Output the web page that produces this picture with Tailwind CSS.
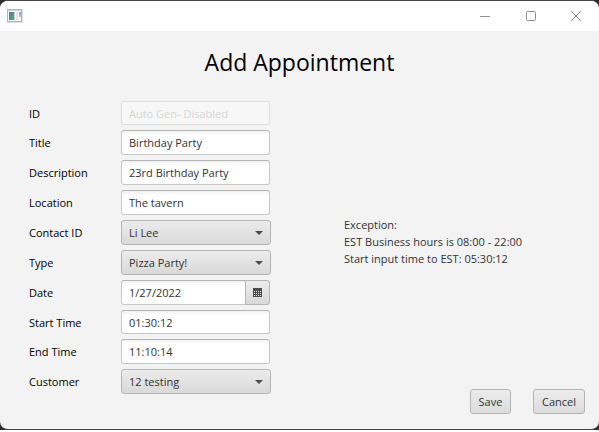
<!DOCTYPE html>
<html lang="en">
<head>
<meta charset="utf-8">
<meta name="viewport" content="width=device-width, initial-scale=1">
<title>Add Appointment</title>
<script src="https://cdn.jsdelivr.net/npm/@tailwindcss/browser@4"></script>
</head>
<body class="flex min-h-screen flex-col bg-white pb-[2px] font-['Open_Sans','Noto_Sans',sans-serif] text-[11px] leading-[17px] text-[#323232]">
<div class="flex grow flex-col bg-[#2b2b2b]">
<div class="flex grow flex-col overflow-hidden rounded-lg border-y border-[#444] bg-[#f3f3f3]">
  <header class="flex h-[30px] shrink-0 items-center justify-between bg-white pl-[7px]">
    <svg class="h-[14px] w-4" viewBox="0 0 16 14" aria-hidden="true">
      <defs><linearGradient id="pane" x1="0" y1="0" x2="1" y2="1"><stop offset="0" stop-color="#5277ac"/><stop offset="1" stop-color="#58ad72"/></linearGradient></defs>
      <rect width="16" height="14" fill="#dddfe1"/>
      <rect x=".5" y=".5" width="14" height="12" fill="#f7f7f7" stroke="#aeb4ba"/>
      <rect x="1" y="1" width="13" height="1" fill="#c9d3dc"/>
      <rect x="2" y="3" width="5" height="8" fill="url(#pane)"/>
      <rect x="7" y="3" width="1" height="8" fill="#c5cdd2"/>
      <rect x="9" y="3" width="2" height="8" fill="#e2e2e2"/>
      <rect x="12" y="3" width="2" height="3" fill="#8eabd3"/>
      <rect x="12" y="6" width="2" height="2" fill="#a4d3a4"/>
    </svg>
    <div class="flex h-full">
      <button type="button" aria-label="Minimize" class="flex w-[45px] items-center justify-center"><svg class="size-[11px]" viewBox="0 0 11 11" fill="none" stroke="#929292"><path d="M0 5.5h10"/></svg></button>
      <button type="button" aria-label="Maximize" class="flex w-[45px] items-center justify-center"><svg class="size-[10px]" viewBox="0 0 10 10" fill="none" stroke="#8c8c8c"><rect x=".5" y=".5" width="9" height="9" rx="1"/></svg></button>
      <button type="button" aria-label="Close" class="flex w-[46px] items-center justify-center"><svg class="size-[10px]" viewBox="0 0 10 10" fill="none" stroke="#8c8c8c"><path d="M0 0l10 10M10 0L0 10"/></svg></button>
    </div>
  </header>

  <main class="flex grow flex-col pr-[14px] pb-[15px] pl-[29px]">
    <h1 class="-mr-[14px] -ml-[29px] pt-[15px] text-center text-[23px] leading-8 text-black">Add Appointment</h1>
    <form class="mt-[23px] flex grow">
      <div class="grid w-[242px] shrink-0 grid-cols-[92px_minmax(0,1fr)] content-start items-center gap-y-[5px]">
        <label for="id" class="text-black">ID</label>
        <input id="id" type="text" placeholder="Auto Gen- Disabled" disabled class="mr-px h-6 min-w-0 rounded-[3px] border border-[#dedede] bg-[#f7f7f7] px-[7px] placeholder:text-[#d6d6d6]">
        <label for="title" class="text-black">Title</label>
        <input id="title" type="text" value="Birthday Party" class="mr-px h-[25px] min-w-0 rounded-[3px] border border-[#c8c8c8] border-t-[#b5b5b5] bg-linear-to-b from-[#f2f2f2] to-white to-20% px-[7px]">
        <label for="description" class="text-black">Description</label>
        <input id="description" type="text" value="23rd Birthday Party" class="mr-px h-[25px] min-w-0 rounded-[3px] border border-[#c8c8c8] border-t-[#b5b5b5] bg-linear-to-b from-[#f2f2f2] to-white to-20% px-[7px]">
        <label for="location" class="text-black">Location</label>
        <input id="location" type="text" value="The tavern" class="mr-px h-[25px] min-w-0 rounded-[3px] border border-[#c8c8c8] border-t-[#b5b5b5] bg-linear-to-b from-[#f2f2f2] to-white to-20% px-[7px]">
        <label for="contact" class="text-black">Contact ID</label>
        <div class="grid grid-cols-[1fr_16px] items-center">
          <select id="contact" class="col-span-2 col-start-1 row-start-1 h-[25px] appearance-none rounded-[3px] border border-[#b5b5b5] bg-linear-to-b from-[#ececec] to-[#d9d9d9] px-[7px]"><option>Li Lee</option></select>
          <svg class="pointer-events-none col-start-2 row-start-1 h-1 w-2" viewBox="0 0 8 4" aria-hidden="true"><path d="M0 0h8L4 4z" fill="#4c4c4c"/></svg>
        </div>
        <label for="type" class="text-black">Type</label>
        <div class="grid grid-cols-[1fr_16px] items-center">
          <select id="type" class="col-span-2 col-start-1 row-start-1 h-[25px] appearance-none rounded-[3px] border border-[#b5b5b5] bg-linear-to-b from-[#ececec] to-[#d9d9d9] px-[7px]"><option>Pizza Party!</option></select>
          <svg class="pointer-events-none col-start-2 row-start-1 h-1 w-2" viewBox="0 0 8 4" aria-hidden="true"><path d="M0 0h8L4 4z" fill="#4c4c4c"/></svg>
        </div>
        <label for="date" class="text-black">Date</label>
        <div class="mr-px flex h-[25px]">
          <input id="date" type="text" value="1/27/2022" class="min-w-0 grow rounded-l-[3px] border border-r-0 border-[#c8c8c8] border-t-[#b5b5b5] bg-linear-to-b from-[#f2f2f2] to-white to-20% px-[7px]">
          <button type="button" aria-label="Choose date" class="flex w-[25px] shrink-0 items-center justify-center rounded-r-[3px] border border-[#b5b5b5] bg-linear-to-b from-[#ececec] to-[#d9d9d9]">
            <svg class="h-[9px] w-[9px]" viewBox="0 0 9 9" aria-hidden="true"><path d="M0 0h9v9H0z" fill="#4c4c4c"/><path d="M1 3.5h7M1 5.5h7M1 7.5h7" stroke="#e4e4e4" stroke-dasharray="1 1"/></svg>
          </button>
        </div>
        <label for="start" class="text-black">Start Time</label>
        <input id="start" type="text" value="01:30:12" class="mr-px h-6 min-w-0 rounded-[3px] border border-[#c8c8c8] border-t-[#b5b5b5] bg-linear-to-b from-[#f2f2f2] to-white to-20% px-[7px]">
        <label for="end" class="text-black">End Time</label>
        <input id="end" type="text" value="11:10:14" class="mr-px h-[25px] min-w-0 rounded-[3px] border border-[#c8c8c8] border-t-[#b5b5b5] bg-linear-to-b from-[#f2f2f2] to-white to-20% px-[7px]">
        <label for="customer" class="text-black">Customer</label>
        <div class="grid grid-cols-[1fr_16px] items-center">
          <select id="customer" class="col-span-2 col-start-1 row-start-1 h-[25px] appearance-none rounded-[3px] border border-[#b5b5b5] bg-linear-to-b from-[#ececec] to-[#d9d9d9] px-[7px]"><option>12 testing</option></select>
          <svg class="pointer-events-none col-start-2 row-start-1 h-1 w-2" viewBox="0 0 8 4" aria-hidden="true"><path d="M0 0h8L4 4z" fill="#4c4c4c"/></svg>
        </div>
      </div>
      <div class="flex grow flex-col justify-between pl-[73px]">
        <p class="pt-[115px]">Exception:<br>EST Business hours is 08:00 - 22:00<br>Start input time to EST: 05:30:12</p>
        <div class="flex justify-end gap-[22px]">
          <button type="submit" class="h-[25px] w-[41px] rounded-[3px] border border-[#b5b5b5] bg-linear-to-b from-[#ececec] to-[#dcdcdc]">Save</button>
          <button type="button" class="h-[25px] w-[52px] rounded-[3px] border border-[#b5b5b5] bg-linear-to-b from-[#ececec] to-[#dcdcdc]">Cancel</button>
        </div>
      </div>
    </form>
  </main>
</div>
</div>
</body>
</html>
